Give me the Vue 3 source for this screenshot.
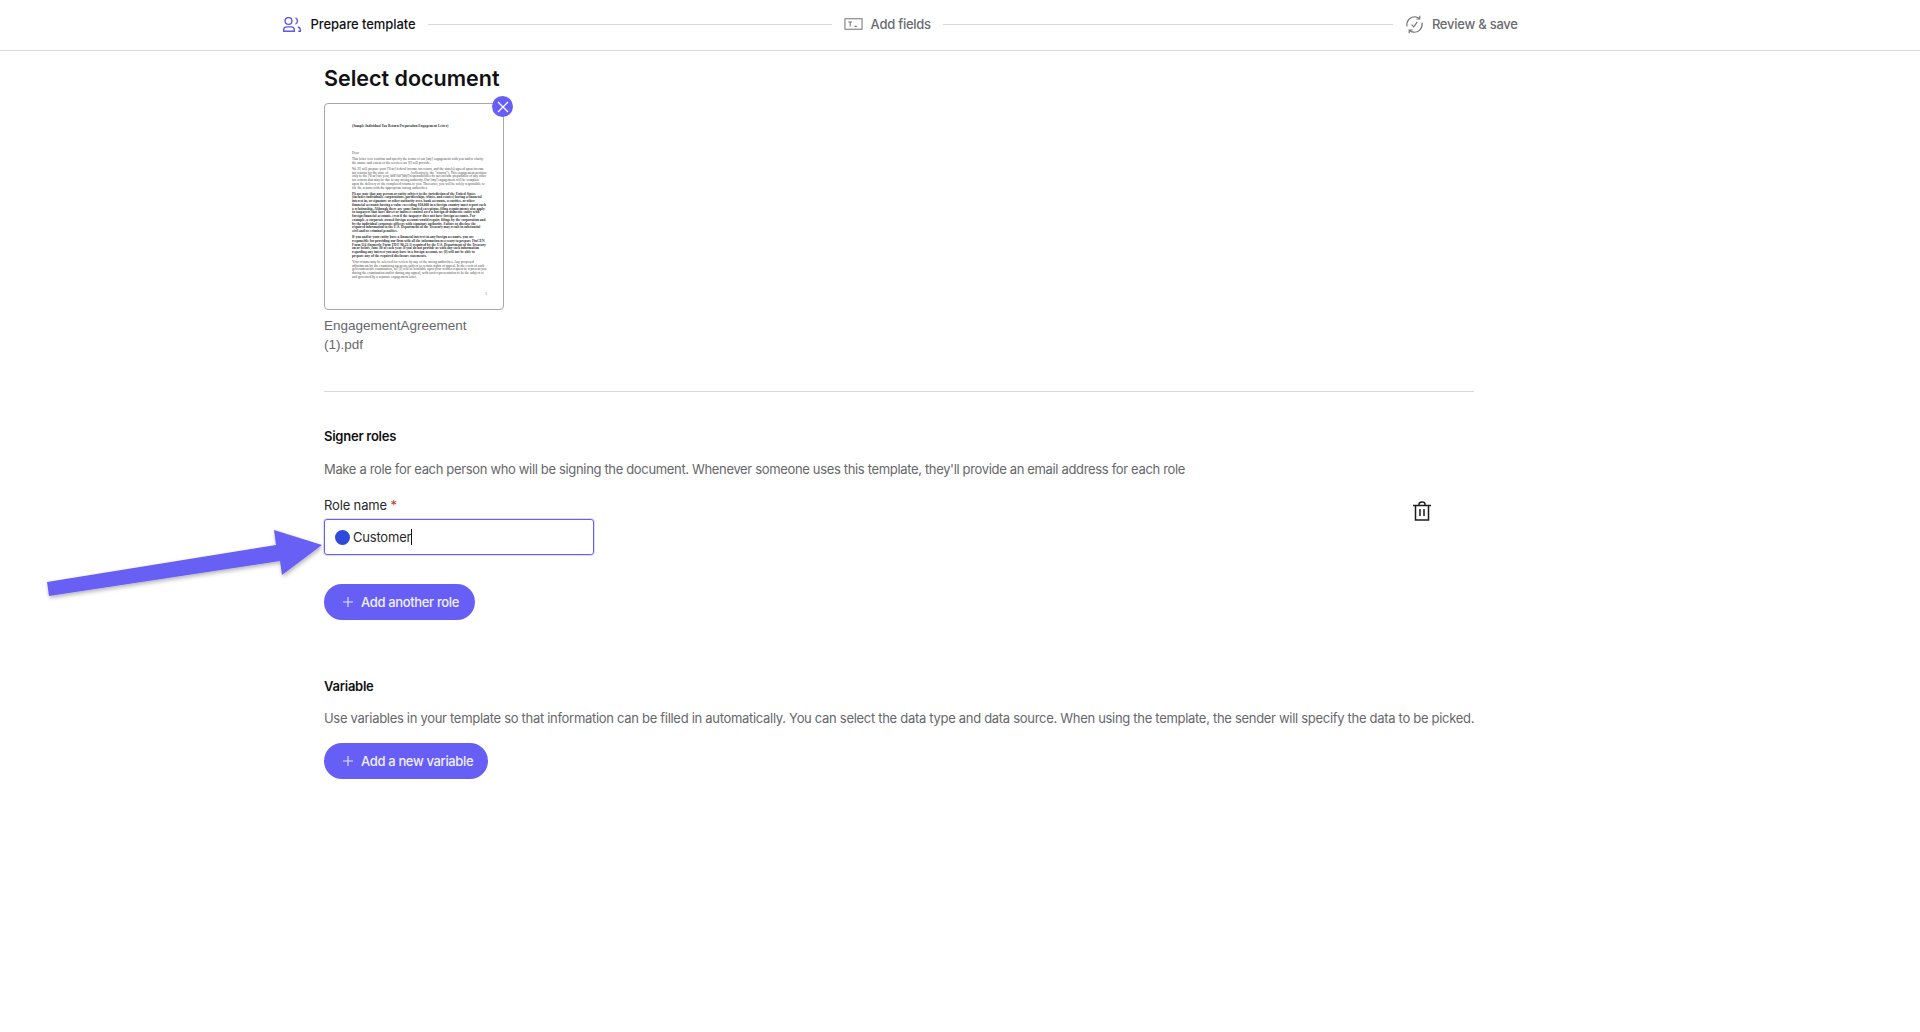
<script setup>
const paragraphs = [
  { text: 'Dear' },
  { text: 'This letter is to confirm and specify the terms of our [my] engagement with you and to clarify the nature and extent of the services we [I] will provide.' },
  { text: 'We [I] will prepare your [Year] federal income tax return, and the state(s) agreed upon income tax returns for the state of ____________ (collectively, the "returns"). This engagement pertains only to the [Year] tax year, and our [my] responsibilities do not include preparation of any other tax returns that may be due to any taxing authority. Our [my] engagement will be complete upon the delivery of the completed returns to you. Thereafter, you will be solely responsible to file the returns with the appropriate taxing authorities.' },
  { text: 'Please note that any person or entity subject to the jurisdiction of the United States (includes individuals, corporations, partnerships, trusts, and estates) having a financial interest in, or signature or other authority over, bank accounts, securities, or other financial accounts having a value exceeding $10,000 in a foreign country must report such a relationship. Although there are some limited exceptions, filing requirements also apply to taxpayers that have direct or indirect control over a foreign or domestic entity with foreign financial accounts, even if the taxpayer does not have foreign accounts. For example, a corporate-owned foreign account would require filings by the corporation and by the individual corporate officers with signature authority. Failure to disclose the required information to the U.S. Department of the Treasury may result in substantial civil and/or criminal penalties.', bold: true },
  { text: 'If you and/or your entity have a financial interest in any foreign accounts, you are responsible for providing our firm with all the information necessary to prepare FinCEN Form 114 (formerly Form TD F 90-22.1) required by the U.S. Department of the Treasury on or before June 30 of each year. If you do not provide us with any such information regarding any interest you may have in a foreign account, we [I] will not be able to prepare any of the required disclosure statements.', bold: true },
  { text: 'Your returns may be selected for review by any of the taxing authorities. Any proposed adjustments by the examining agent are subject to certain rights of appeal. In the event of such government tax examination, we [I] will be available upon your written request to represent you during the examination and/or during any appeal, with such representation to be the subject of and governed by a separate engagement letter.' }
]
</script>

<template>
  <div class="page">
    <header class="stepper">
      <div class="step active">
        <svg class="step-icon" width="18" height="15" viewBox="0 0 18 15" fill="none" stroke="#5f57f0" stroke-width="1.4">
          <ellipse cx="5.5" cy="4" rx="3.4" ry="3.4" />
          <path d="M12.500 .8c1.500 .6 2 2 2 3.200s-.5 2.600-2 3.200" />
          <path d="M.7 14.300v-1.500c0-1.600 1.300-2.900 3-2.900h4.600c1.700 0 3 1.300 3 2.900v1.500z" />
          <path d="M14.800 10c1.400 .3 2.500 1.400 2.500 2.800v1.500h-2" />
        </svg>
        <span>Prepare template</span>
      </div>
      <div class="line first"></div>
      <div class="step">
        <svg class="step-icon" width="19" height="14" viewBox="0 0 20 14" fill="none" stroke="#77777a" stroke-width="1.100">
          <rect x="1" y="1.500" width="18" height="11" />
          <path d="M4.500 5h4M6.500 5v4.500M11 9.500h2.500" />
        </svg>
        <span>Add fields</span>
      </div>
      <div class="line second"></div>
      <div class="step">
        <svg class="step-icon" width="19" height="19" viewBox="0 0 20 20" fill="none" stroke="#6f6f72" stroke-width="1.200">
          <path d="M2 12C1.200 6 5.500 1.800 10 1.800c2 0 3.700.7 5 1.900" />
          <path d="M15.600 .8v3.400h-3.400" />
          <path d="M18 8c.8 6-3.500 10.200-8 10.200-2 0-3.700-.7-5-1.900" />
          <path d="M4.400 19.200v-3.400h3.400" />
          <path d="M7 10.200l2.200 2.300 3.600-5" />
        </svg>
        <span>Review &amp; save</span>
      </div>
    </header>

    <main class="content">
      <h1 class="title">Select document</h1>

      <div class="doc">
        <div class="doc-thumb">
          <div class="doc-page">
            <p class="doc-head">(Sample Individual Tax Return Preparation Engagement Letter)</p>
            <p
              v-for="(p, i) in paragraphs"
              :key="i"
              class="doc-par"
              :class="{ bold: p.bold }"
            >{{ p.text }}</p>
            <p class="doc-num">1</p>
          </div>
          <button class="doc-remove">
            <svg width="12" height="12" viewBox="0 0 12 12" fill="none" stroke="#fff" stroke-width="1.300">
              <path d="M1 1l10 10M11 1L1 11" />
            </svg>
          </button>
        </div>
        <p class="doc-name">EngagementAgreement (1).pdf</p>
      </div>

      <hr class="divider" />

      <section class="roles">
        <h2 class="section-title">Signer roles</h2>
        <p class="section-desc">Make a role for each person who will be signing the document. Whenever someone uses this template, they'll provide an email address for each role</p>
        <div class="role-row">
          <div class="field">
            <label class="field-label">Role name <span class="req">*</span></label>
            <div class="role-input">
              <span class="role-dot"></span>
              <span class="role-value">Customer</span>
              <span class="caret"></span>
            </div>
          </div>
          <button class="trash">
            <svg width="18" height="20" viewBox="0 0 18 20" fill="none" stroke="#1c1c1f" stroke-width="1.500">
              <path d="M0 4.500h18" />
              <path d="M6 4.500V3.200C6 1.800 7.200 1 9 1s3 .8 3 2.200v1.300" />
              <path d="M2.500 4.500v14.500h13V4.500" />
              <path d="M7 8v7M11 8v7" />
            </svg>
          </button>
        </div>
        <button class="add-btn">
          <svg width="10" height="10" viewBox="0 0 10 10" stroke="#e6e4ff" stroke-width="1.100"><path d="M5 0v10M0 5h10" /></svg>
          Add another role
        </button>
      </section>

      <section class="variables">
        <h2 class="section-title">Variable</h2>
        <p class="section-desc">Use variables in your template so that information can be filled in automatically. You can select the data type and data source. When using the template, the sender will specify the data to be picked.</p>
        <button class="add-btn">
          <svg width="10" height="10" viewBox="0 0 10 10" stroke="#e6e4ff" stroke-width="1.100"><path d="M5 0v10M0 5h10" /></svg>
          Add a new variable
        </button>
      </section>
    </main>

    <!-- annotation arrow drawn over the screenshot -->
    <svg class="arrow" width="340" height="100" viewBox="0 0 340 100">
      <defs>
        <filter id="arrow-shadow" x="-5%" y="-20%" width="110%" height="150%">
          <feDropShadow dx="1" dy="2" stdDeviation="2" flood-color="#000" flood-opacity="0.3" />
        </filter>
      </defs>
      <polygon
        points="47,62 276,25 274,10 322,25 282,55 280,41 49,76"
        fill="#675ff5"
        filter="url(#arrow-shadow)"
      />
    </svg>
  </div>
</template>

<style scoped>
.page {
  position: relative;
  min-height: 1032px;
  background: #fff;
  font-family: Inter, "Liberation Sans", sans-serif;
  color: #111114;
}

.stepper {
  display: flex;
  align-items: center;
  gap: 12px;
  height: 48px;
  padding: 0 0 2px 283px;
  border-bottom: 1px solid #d9d9d9;
}

.step {
  display: flex;
  align-items: center;
  gap: 8px;
  font-size: 13px;
  font-weight: 500;
  letter-spacing: -0.25px;
  color: #6b6b6f;
  white-space: nowrap;
}

.step.active {
  gap: 9.500px;
  letter-spacing: -0.08px;
  color: #111114;
}

.step-icon {
  flex-shrink: 0;
}

.line {
  height: 1px;
  background: #d9d9d9;
}

.line.first {
  width: 404px;
}

.line.second {
  width: 450px;
}

.content {
  width: 1150px;
  margin-left: 324px;
}

.title {
  margin: 14px 0 0;
  font-size: 21.500px;
  line-height: 27px;
  font-weight: 600;
}

.doc {
  width: 180px;
  margin-top: 11px;
}

.doc-thumb {
  position: relative;
  box-sizing: border-box;
  width: 180px;
  height: 207px;
  border: 1px solid #a9a9a9;
  border-radius: 4px;
}

.doc-page {
  padding: 21px 16px 0 27px;
  font-family: "Liberation Serif", serif;
  font-size: 3.500px;
  line-height: 3.750px;
  color: #4a4a4a;
}

.doc-head {
  margin: 0;
  height: 27px;
  font-weight: 700;
  color: #333;
}

.doc-par {
  margin: 0 0 2.250px;
}

.doc-par.bold {
  font-weight: 700;
  color: #333;
}

.doc-num {
  margin: 13px 0 0;
  text-align: right;
}

.doc-remove {
  position: absolute;
  top: -8px;
  right: -10px;
  display: flex;
  align-items: center;
  justify-content: center;
  width: 21px;
  height: 21px;
  padding: 0;
  border: none;
  border-radius: 50%;
  background: #675ff5;
}

.doc-name {
  margin: 6px 0 0;
  width: 150px;
  font-family: "Liberation Sans", sans-serif;
  font-size: 13.500px;
  line-height: 19px;
  color: #66676b;
}

.divider {
  margin: 37px 0 0;
  border: none;
  border-top: 1px solid #d9d9d9;
}

.roles {
  margin-top: 35px;
}

.section-title {
  margin: 0;
  font-size: 13px;
  line-height: 18px;
  font-weight: 600;
  letter-spacing: -0.25px;
}

.section-desc {
  margin: 14px 0 0;
  font-size: 13px;
  line-height: 18px;
  letter-spacing: -0.3px;
  color: #66676b;
  white-space: nowrap;
}

.roles .section-desc {
  margin-top: 15px;
  letter-spacing: -0.34px;
}

.role-row {
  display: flex;
  align-items: flex-start;
  justify-content: space-between;
  margin-top: 18px;
}

.field-label {
  display: block;
  font-size: 13px;
  line-height: 18px;
  letter-spacing: -0.15px;
  color: #2a2a2d;
}

.req {
  color: #c0392b;
}

.role-input {
  display: flex;
  align-items: center;
  box-sizing: border-box;
  width: 270px;
  height: 36px;
  margin-top: 5px;
  padding-left: 10px;
  border: 1.500px solid #675ff5;
  border-radius: 3px;
  box-shadow: 0 0 0 1px #dcdafd;
  font-size: 13px;
  letter-spacing: -0.2px;
}

.role-dot {
  width: 15px;
  height: 15px;
  margin-right: 3px;
  border-radius: 50%;
  background: #2f4adb;
}

.role-value {
  color: #2a2a2d;
}

.caret {
  width: 1px;
  height: 16px;
  background: #111;
}

.trash {
  margin: 5px 43px 0 0;
  padding: 0;
  border: none;
  background: none;
}

.add-btn {
  display: flex;
  align-items: center;
  gap: 8px;
  height: 36px;
  padding: 0 15px 0 19px;
  border: none;
  border-radius: 18px;
  background: #675ff5;
  color: #f1f0ff;
  font-family: inherit;
  font-size: 13px;
  font-weight: 500;
  letter-spacing: -0.35px;
}

.roles .add-btn {
  margin-top: 29px;
  padding-right: 16px;
}

.variables {
  margin-top: 57px;
}

.variables .add-btn {
  margin-top: 16px;
}

.arrow {
  position: absolute;
  left: 0;
  top: 520px;
  pointer-events: none;
}
</style>

<style>
body {
  background: #fff;
}
</style>
